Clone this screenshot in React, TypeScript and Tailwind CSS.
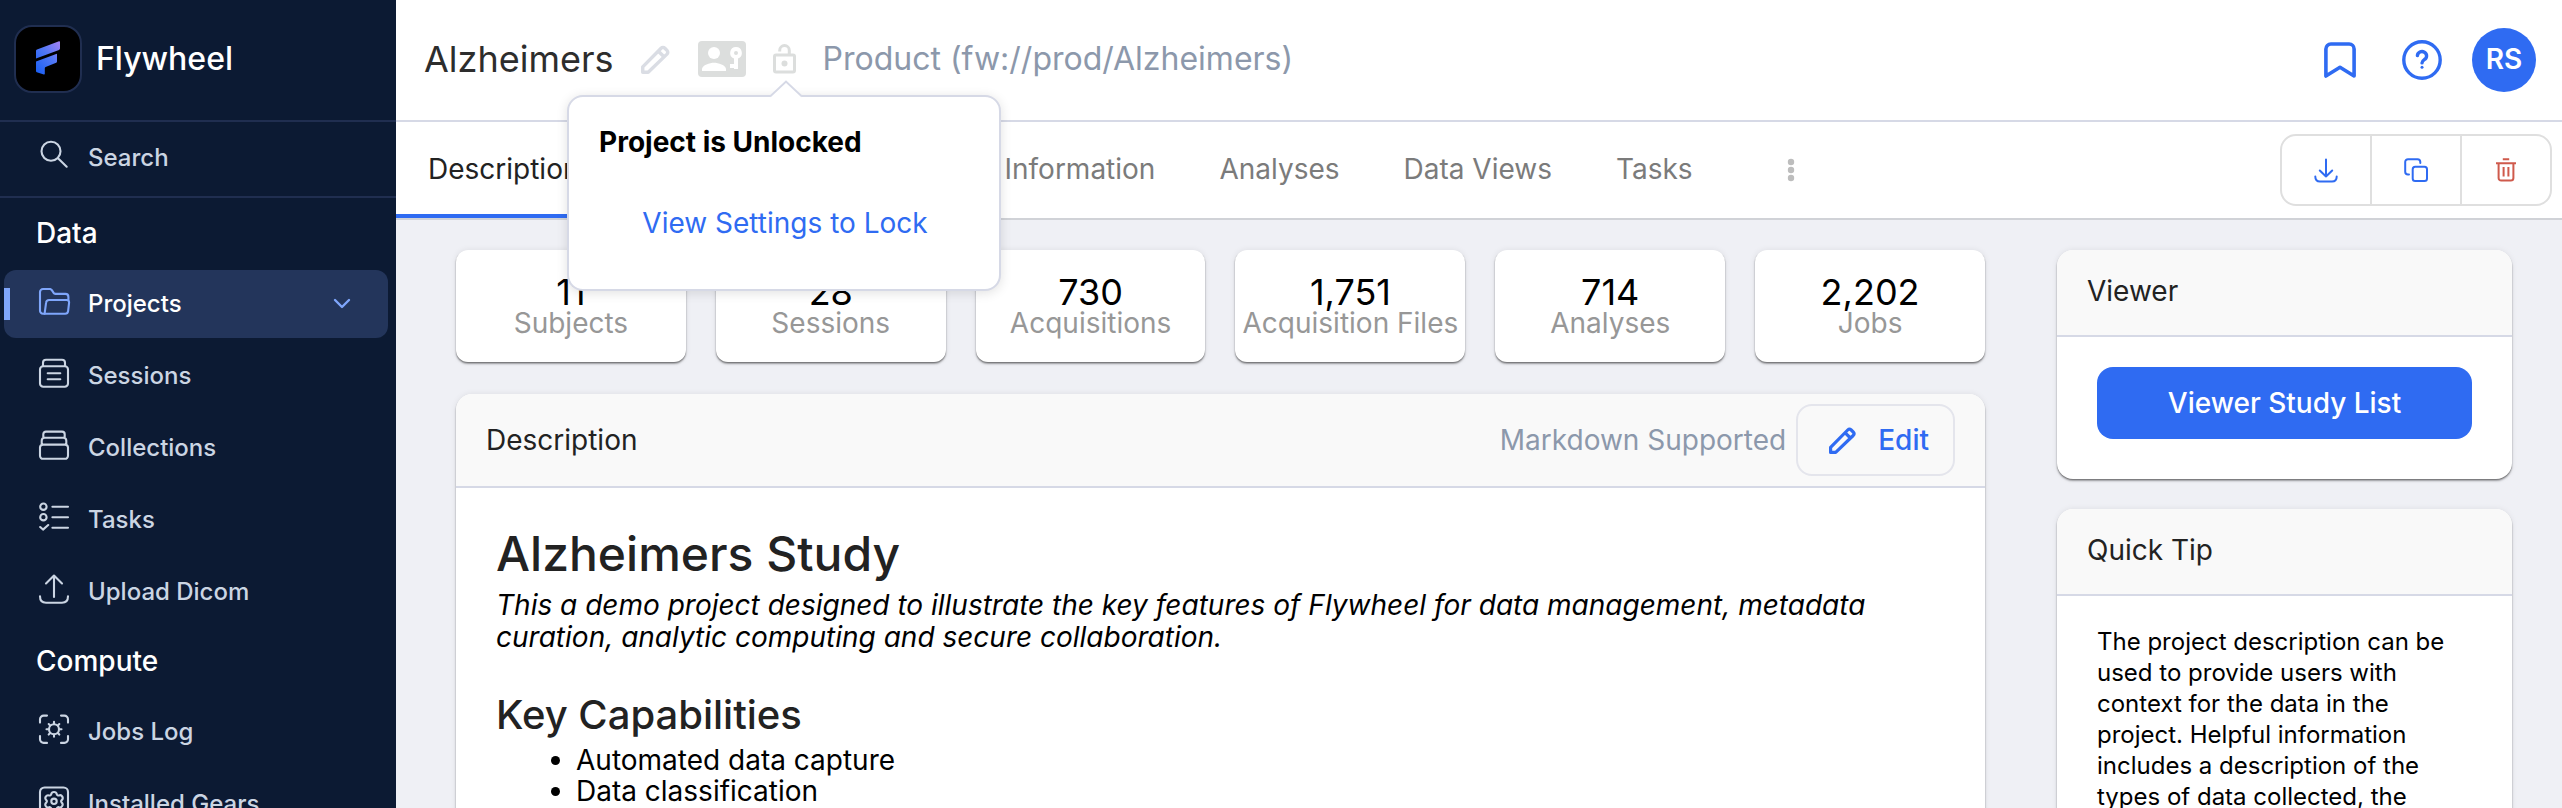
import type { ReactNode } from 'react';

const cardShadow =
  'shadow-[0_2px_2px_rgba(0,0,0,0.32),0_1px_1px_rgba(0,0,0,0.25),0_0_6px_rgba(0,0,0,0.08)]';

function SideIcon({ children }: { children: ReactNode }) {
  return (
    <svg
      aria-hidden="true"
      viewBox="0 0 32 36"
      className="h-9 w-8 shrink-0 overflow-visible"
      fill="none"
      stroke="currentColor"
      strokeWidth="2.1"
      strokeLinecap="round"
      strokeLinejoin="round"
    >
      {children}
    </svg>
  );
}

const icons = {
  search: (
    <SideIcon>
      <circle cx="13" cy="11.3" r="9.5" />
      <path d="M20 18.3l8.7 8.4" />
    </SideIcon>
  ),
  folder: (
    <SideIcon>
      <path d="M6.5 27.7H5a3 3 0 0 1-3-3V6a3 3 0 0 1 3-3h7.4l1.4 1.1 2.2 3.3 1 .5h10.4a3 3 0 0 1 3 3v3" />
      <path d="M6.6 27.7l1.5-11a3 3 0 0 1 3-2.7h17.6a2.4 2.4 0 0 1 2.4 2.7l-1 8.4a3 3 0 0 1-3 2.6z" />
    </SideIcon>
  ),
  sessions: (
    <SideIcon>
      <rect x="2" y="8.2" width="28" height="20.6" rx="3.2" />
      <path d="M5 8V4.7a3 3 0 0 1 3-3h16a3 3 0 0 1 3 3V8M9.7 15.2h12.6M9.7 21.3h12.6" />
    </SideIcon>
  ),
  collections: (
    <SideIcon>
      <path d="M2 17.4a3 3 0 0 1 3-2.8h22a3 3 0 0 1 3 2.8v8.4a3 3 0 0 1-3 3H5a3 3 0 0 1-3-3zM3.7 14.4v-3.6a3 3 0 0 1 3-3h18.6a3 3 0 0 1 3 3v3.6M5.3 8V4.2a2.6 2.6 0 0 1 2.6-2.6h16.2a2.6 2.6 0 0 1 2.6 2.6V8" />
    </SideIcon>
  ),
  tasks: (
    <SideIcon>
      <circle cx="5.4" cy="4.7" r="3.2" />
      <circle cx="5.4" cy="15.2" r="3.2" />
      <path d="M14.4 4.7h15.6M14.4 15.2h15.6M14.4 25.7h15.6M2.2 25l2.8 2.6 5.2-4.6" />
    </SideIcon>
  ),
  upload: (
    <SideIcon>
      <path d="M16 23V2M8 9.4l8-7.8 8 7.8M2 22.2c0 4 2 6.5 6 6.5h16c4 0 6-2.5 6-6.5" />
    </SideIcon>
  ),
  jobs: (
    <SideIcon>
      <path d="M2 8.6V5.2a3.6 3.6 0 0 1 3.6-3.6H9M23 1.6h3.4A3.6 3.6 0 0 1 30 5.2v3.4M30 22v3.3a3.6 3.6 0 0 1-3.6 3.6H23M9 28.9H5.6A3.6 3.6 0 0 1 2 25.3V22" />
      <circle cx="16" cy="15.3" r="5" />
      <path d="M16 10V7.8M16 22.8V20.6M21.3 15.3h2.2M8.5 15.3h2.2M19.8 11.5l1.5-1.5M10.7 20.6l1.5-1.5M19.8 19.1l1.5 1.5M10.7 10l1.5 1.5" />
    </SideIcon>
  ),
  gears: (
    <SideIcon>
      <rect x="2" y="1.5" width="28" height="28" rx="4.5" />
      <circle cx="16" cy="15.3" r="2.7" />
      <path d="M13.2 8.3c.6-3 5-3 5.6 0 .2 1 1.3 1.5 2.2 1.1 2.9-1 5 2.7 2.7 4.7-.8.7-.8 1.8 0 2.5 2.3 2-.1 5.6-2.7 4.7-1-.4-2 .1-2.2 1.1-.6 3-5 3-5.6 0-.2-1-1.3-1.5-2.2-1.1-2.9 1-5-2.7-2.7-4.7.8-.7.8-1.8 0-2.5-2.3-2 .1-5.6 2.7-4.7 1 .4 2-.1 2.2-1.1z" />
    </SideIcon>
  ),
};

function NavItem({ icon, label, active }: { icon: ReactNode; label: string; active?: boolean }) {
  return (
    <a
      href="#"
      className={
        active
          ? 'relative flex h-[68px] shrink-0 items-center gap-[18px] rounded-xl bg-[#23355b] pr-[38px] pl-[34px] text-2xl font-medium text-white'
          : 'relative flex h-[68px] shrink-0 items-center gap-[18px] rounded-xl pr-[38px] pl-[34px] text-2xl font-medium text-[#cbd5e3]'
      }
    >
      {active && <span className="absolute top-[18px] left-0 h-8 w-1.5 bg-[#7fa6fb]" />}
      <span className={active ? 'text-[#7fa6fb]' : ''}>{icon}</span>
      <span className="flex-1">{label}</span>
      {active && (
        <svg aria-hidden="true" viewBox="0 0 16 10" className="h-2.5 w-4 overflow-visible text-[#7fa6fb]" fill="none" stroke="currentColor" strokeWidth="2.4" strokeLinecap="round" strokeLinejoin="round">
          <path d="M1 1l7 7 7-7" />
        </svg>
      )}
    </a>
  );
}

function NavHeading({ children }: { children: ReactNode }) {
  return (
    <h2 className="flex h-[72px] shrink-0 items-center pb-0.5 pl-8 text-[28px] font-medium text-white">{children}</h2>
  );
}

function Sidebar() {
  return (
    <aside className="flex w-[396px] shrink-0 flex-col overflow-hidden bg-[#0c1a33]">
      <div className="flex h-[122px] shrink-0 items-center gap-[14px] border-b-2 border-[#202e50] pb-0.5 pl-[14px]">
        <div className="flex size-[68px] items-center justify-center rounded-[18px] border-2 border-[#202e50] bg-black">
          <svg aria-hidden="true" viewBox="0 0 24 34" className="mb-0.5 h-[34px] w-6">
            <defs>
              <linearGradient id="brand" x1="1" y1="0" x2="0.2" y2="1">
                <stop offset="0" stopColor="#a682f2" />
                <stop offset="0.5" stopColor="#4f77f6" />
                <stop offset="1" stopColor="#1f62f5" />
              </linearGradient>
            </defs>
            <path
              fill="url(#brand)"
              d="M0 9.8Q0 8.8 1 8.4L23 0.2Q24 0 24 1V7.6Q24 8.6 23 9L0 17.6ZM0 20.6L20.2 12.9Q21 12.7 21 13.5V20.6Q21 21.4 20.2 21.8L9.6 26Q8.8 26.4 8.8 27.2V32.8Q8.8 33.8 7.8 33.5L0.8 31.2Q0 30.9 0 30Z"
            />
          </svg>
        </div>
        <span className="text-[32px] font-medium text-white">Flywheel</span>
      </div>
      <div className="flex h-[76px] shrink-0 items-center border-b-2 border-[#202e50] pb-0.5 pl-[38px] text-[#cbd5e3]">
        <button type="button" className="flex items-center gap-[18px] text-2xl font-medium">
          {icons.search}
          Search
        </button>
      </div>
      <nav className="flex flex-col pr-2 pl-1">
        <NavHeading>Data</NavHeading>
        <div className="flex flex-col gap-1">
          <NavItem icon={icons.folder} label="Projects" active />
          <NavItem icon={icons.sessions} label="Sessions" />
          <NavItem icon={icons.collections} label="Collections" />
          <NavItem icon={icons.tasks} label="Tasks" />
          <NavItem icon={icons.upload} label="Upload Dicom" />
        </div>
        <NavHeading>Compute</NavHeading>
        <div className="flex flex-col gap-1">
          <NavItem icon={icons.jobs} label="Jobs Log" />
          <NavItem icon={icons.gears} label="Installed Gears" />
        </div>
      </nav>
    </aside>
  );
}

function Pencil({ className }: { className: string }) {
  return (
    <svg aria-hidden="true" viewBox="0 0 27 27" className={className} fill="none" stroke="currentColor" strokeWidth="3.2" strokeLinejoin="round">
      <path d="M1.6 25.4v-5L18.7 3a2.5 2.5 0 0 1 3.5 0l2 2a2.5 2.5 0 0 1 0 3.5L6.700 25.4zM16.2 5.8l5.200 5.2" />
    </svg>
  );
}

function LockPopover() {
  return (
    <div
      role="dialog"
      aria-label="Project is Unlocked"
      className="absolute top-[51px] left-1/2 z-20 flex w-[434px] -translate-x-1/2 flex-col rounded-2xl border-2 border-[#d6d9e6] bg-white px-[30px] pt-7 pb-[30px] shadow-[0_2px_12px_rgba(0,0,0,0.12)]"
    >
      <svg aria-hidden="true" viewBox="0 0 32 18" className="absolute -top-[17px] left-[201px] h-[18px] w-8">
        <path d="M0 18V16.5L16 1.5L32 16.5V18Z" fill="white" />
        <path d="M0 16.5L16 1.5L32 16.5" fill="none" stroke="#d6d9e6" strokeWidth="2" />
      </svg>
      <p className="text-[28px] leading-[34px] font-bold text-black">Project is Unlocked</p>
      <button type="button" className="mt-7 h-[72px] self-center pl-0.5 text-[28px] whitespace-nowrap text-[#2f6bf2]">
        View Settings to Lock
      </button>
    </div>
  );
}

function Header() {
  return (
    <header className="relative z-10 flex h-[122px] shrink-0 items-center border-b-2 border-[#d6d9e6] bg-white pr-[26px] pl-7">
      <div className="flex items-center pb-0.5">
        <h1 className="text-4xl text-[#2d2d2d]">Alzheimers</h1>
        <button type="button" aria-label="Rename project" className="ml-[27px] text-[#dadde4]">
          <Pencil className="size-[29px]" />
        </button>
        <button type="button" aria-label="Project access" className="ml-7 text-[#dcdedd]">
          <svg aria-hidden="true" viewBox="0 0 48 36" className="h-9 w-12">
            <rect width="48" height="36" rx="4" fill="currentColor" />
            <circle cx="16" cy="12" r="6" fill="white" />
            <path d="M4 30v-2c0-4 8-6.3 12-6.3s12 2.3 12 6.3v2z" fill="white" />
            <path d="M38 6a6 6 0 0 1 2 11.6V28h-4v-1h-4v-4h4v-5.400A6 6 0 0 1 38 6zm0 4a2 2 0 1 0 0 4 2 2 0 0 0 0-4z" fill="white" fillRule="evenodd" />
          </svg>
        </button>
        <div className="relative ml-[27px] flex">
          <button type="button" aria-label="Lock project" className="text-[#dcdedd]">
            <svg aria-hidden="true" viewBox="0 0 23 30" className="h-[30px] w-[23px]" fill="none" stroke="currentColor" strokeWidth="3">
              <rect x="1.500" y="11" width="20" height="17" rx="1.500" />
              <path d="M6.7 7.5V6.4a4.800 4.800 0 0 1 9.600 0V11" />
              <circle cx="11.5" cy="19.5" r="3" fill="currentColor" stroke="none" />
            </svg>
          </button>
          <LockPopover />
        </div>
        <span className="ml-[27px] text-[32px] text-[#8c98ab]">Product (fw://prod/Alzheimers)</span>
      </div>
      <div className="ml-auto flex items-center text-[#2f6bf2]">
        <button type="button" aria-label="Bookmarks">
          <svg aria-hidden="true" viewBox="0 0 32 36" className="h-9 w-8" fill="none" stroke="currentColor" strokeWidth="3.6" strokeLinejoin="round">
            <path d="M1.9 34V7a5 5 0 0 1 5-5h18.200a5 5 0 0 1 5 5v27L16 25.2z" />
          </svg>
        </button>
        <button type="button" aria-label="Help" className="ml-[46px]">
          <svg aria-hidden="true" viewBox="0 0 40 40" className="size-10" fill="none" stroke="currentColor" strokeWidth="3.4" strokeLinecap="round">
            <circle cx="20" cy="20" r="18.2" />
            <path d="M15.4 15.6a4.600 4.300 0 1 1 6.900 4c-1.400.9-2.300 1.500-2.300 3.300" />
            <circle cx="20" cy="27.2" r="1.500" fill="currentColor" stroke="none" />
          </svg>
        </button>
        <button type="button" className="ml-[30px] size-16 rounded-full bg-[#2f6bf2] pb-0.5 text-[28px] font-semibold text-white">
          RS
        </button>
      </div>
    </header>
  );
}

const tabs = ['Information', 'Analyses', 'Data Views', 'Tasks'];

function TabBar() {
  return (
    <div className="flex h-[98px] shrink-0 items-stretch border-b-2 border-[#d0d2d7] bg-white pr-2.5">
      <nav className="flex text-[28px] text-[#7b7b7b]">
        <a href="#" aria-current="page" className="mr-[361px] flex items-center border-b-4 border-[#2f6bf2] px-8 pt-0.5 text-[#222]">
          Description
        </a>
        {tabs.map((tab) => (
          <a key={tab} href="#" className="flex items-center px-8 pb-0.5">
            {tab}
          </a>
        ))}
      </nav>
      <button type="button" aria-label="More tabs" className="ml-[62px] text-[#bdbdbd]">
        <svg aria-hidden="true" viewBox="0 0 8 24" className="h-6 w-2" fill="currentColor">
          <circle cx="4" cy="4" r="3.200" />
          <circle cx="4" cy="12" r="3.200" />
          <circle cx="4" cy="20" r="3.200" />
        </svg>
      </button>
      <div className="my-auto ml-auto flex h-[72px] divide-x-2 divide-[#dfdfdf] rounded-2xl border-2 border-[#dfdfdf] text-[#2f6bf2]">
        <button type="button" aria-label="Download" className="flex w-[90px] items-center justify-center">
          <svg aria-hidden="true" viewBox="0 0 24 24" className="size-6 overflow-visible" fill="none" stroke="currentColor" strokeWidth="2" strokeLinecap="round" strokeLinejoin="round">
            <path d="M12 1.5v17M5.8 12.5l6.200 6 6.200-6M1.3 18.5c0 3 1.500 5 4.700 5h12c3.200 0 4.700-2 4.700-5" />
          </svg>
        </button>
        <button type="button" aria-label="Copy" className="flex w-[90px] items-center justify-center">
          <svg aria-hidden="true" viewBox="0 0 24 24" className="size-6" fill="none" stroke="currentColor" strokeWidth="2" strokeLinecap="round">
            <rect x="8.7" y="8.7" width="14.300" height="14.300" rx="2.500" />
            <path d="M5 16.5H4a2.800 2.800 0 0 1-2.800-2.800V4A2.800 2.800 0 0 1 4 1.200h9.500A2.800 2.800 0 0 1 16.300 4v1" />
          </svg>
        </button>
        <button type="button" aria-label="Delete" className="flex w-[88px] items-center justify-center text-[#cf5a4c]">
          <svg aria-hidden="true" viewBox="0 0 20 24" className="h-6 w-5" fill="none" stroke="currentColor" strokeWidth="2">
            <path d="M0 5.2h20M6.8 1.3h6.400M2.6 5.2V20a2.600 2.600 0 0 0 2.600 2.600h9.600a2.600 2.600 0 0 0 2.600-2.600V5.200M7.6 9v9.500M12.4 9v9.500" />
          </svg>
        </button>
      </div>
    </div>
  );
}

const stats = [
  { value: '11', label: 'Subjects' },
  { value: '28', label: 'Sessions' },
  { value: '730', label: 'Acquisitions' },
  { value: '1,751', label: 'Acquisition Files' },
  { value: '714', label: 'Analyses' },
  { value: '2,202', label: 'Jobs' },
];

function Stats() {
  return (
    <div className="grid grid-cols-6 gap-[30px]">
      {stats.map((stat) => (
        <div key={stat.label} className={`rounded-xl bg-white pt-[26px] pb-6 text-center whitespace-nowrap ${cardShadow}`}>
          <div className="text-4xl leading-8 text-black">{stat.value}</div>
          <div className="text-[28px] leading-[30px] text-[#979797]">{stat.label}</div>
        </div>
      ))}
    </div>
  );
}

function DescriptionPanel() {
  return (
    <section className={`mt-8 rounded-2xl bg-white ${cardShadow}`}>
      <div className="flex h-[94px] items-center rounded-t-2xl border-b-2 border-[#d6d9e6] bg-[#f9f9f9] px-[30px] text-[28px]">
        <h2 className="text-[#222]">Description</h2>
        <span className="ml-auto text-[#8c98ab]">Markdown Supported</span>
        <button type="button" className="ml-2.5 flex h-[72px] items-center gap-[22px] rounded-2xl border-2 border-[#e4e5ec] pr-6 pl-[31px] font-medium text-[#2f6bf2]">
          <Pencil className="size-[27px]" />
          Edit
        </button>
      </div>
      <div className="px-10 pt-[34px] pb-10 text-[28px] text-black">
        <h1 className="text-[48px] leading-[64px] font-medium text-[#222]">Alzheimers Study</h1>
        <p className="mt-[3px] leading-8 italic">
          This a demo project designed to illustrate the key features of Flywheel for data management, metadata
          curation, analytic computing and secure collaboration.
        </p>
        <h2 className="mt-[35px] text-[40px] leading-[54px] font-medium text-[#222]">Key Capabilities</h2>
        <ul className="mt-[3px] list-disc pl-20 leading-[31px]">
          <li>Automated data capture</li>
          <li>Data classification</li>
        </ul>
      </div>
    </section>
  );
}

function SidePanel({ title, children }: { title: string; children: ReactNode }) {
  return (
    <section className={`rounded-2xl bg-white ${cardShadow}`}>
      <h2 className="flex h-[87px] items-center rounded-t-2xl border-b-2 border-[#d6d9e6] bg-[#f9f9f9] px-[30px] pb-1 text-[28px] text-[#222]">
        {title}
      </h2>
      {children}
    </section>
  );
}

export default function App() {
  return (
    <div className="flex h-screen overflow-hidden font-['Inter',sans-serif]">
      <Sidebar />
      <div className="flex min-w-0 flex-1 flex-col">
        <Header />
        <TabBar />
        <main className="flex min-h-0 flex-1 items-start gap-[72px] overflow-hidden bg-[#eff0f5] pt-[30px] pr-[50px] pl-[60px]">
          <div className="min-w-0 flex-1">
            <Stats />
            <DescriptionPanel />
          </div>
          <div className="flex w-[455px] shrink-0 flex-col gap-[30px]">
            <SidePanel title="Viewer">
              <div className="px-10 pt-[30px] pb-10">
                <button type="button" className="h-[72px] w-full rounded-2xl bg-[#2f6bf2] text-[28px] font-medium text-white">
                  Viewer Study List
                </button>
              </div>
            </SidePanel>
            <SidePanel title="Quick Tip">
              <p className="px-10 pt-[30px] pb-10 text-2xl leading-[31px] text-black">
                The project description can be used to provide users with context for the data in the project. Helpful
                information includes a description of the types of data collected, the
              </p>
            </SidePanel>
          </div>
        </main>
      </div>
    </div>
  );
}
